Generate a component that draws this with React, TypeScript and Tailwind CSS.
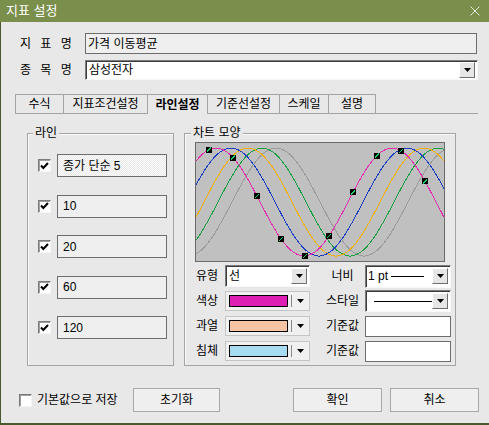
import React from 'react';

const FONT = "font-['Liberation_Sans','Noto_Sans_CJK_KR',sans-serif]";

function Tri() {
  return (
    <svg width="7" height="4" viewBox="0 0 7 4">
      <polygon points="0,0 7,0 3.5,4" fill="#000" />
    </svg>
  );
}

function DropBtn({ className = '' }: { className?: string }) {
  return (
    <div
      className={`flex h-[16px] w-[16px] items-center justify-center border border-t-white border-l-white border-r-[#6f6f6f] border-b-[#6f6f6f] bg-[#e6e6e6] ${className}`}
    >
      <Tri />
    </div>
  );
}

function Check({ checked = true }: { checked?: boolean }) {
  return (
    <div className="flex h-[13px] w-[13px] shrink-0 items-center justify-center border border-t-[#7a7a7a] border-l-[#7a7a7a] border-r-[#f4f4f4] border-b-[#f4f4f4] bg-white shadow-[inset_1px_1px_0_#a0a0a0]">
      {checked && (
        <svg width="9" height="8" viewBox="0 0 9 8">
          <path d="M1 3.5 L3.3 6 L8 1" fill="none" stroke="#000" strokeWidth="2" />
        </svg>
      )}
    </div>
  );
}

const PERIOD = 176;
const yAt = (x: number, peak: number) => 59 - 54 * Math.cos((2 * Math.PI * (x - peak)) / PERIOD);

function curve(peak: number) {
  const pts: string[] = [];
  for (let x = 0; x <= 248; x++) pts.push(`${x},${yAt(x, peak).toFixed(1)}`);
  return pts.join(' ');
}

const lines = [
  { peak: 80, color: '#9a9a9a' },
  { peak: 66, color: '#12a043' },
  { peak: 52, color: '#f4b000' },
  { peak: 35, color: '#1b3cc4' },
  { peak: 20, color: '#e62cae' },
];

function Chart() {
  const marks = Array.from({ length: 10 }, (_, k) => 13 + 24 * k);
  return (
    <div className="h-[120px] w-[250px] border border-[#6b6b6b] bg-[#c0c0c0]">
      <svg width="248" height="118" viewBox="0 0 248 118" shapeRendering="crispEdges">
        {lines.map((l) => (
          <polyline key={l.peak} points={curve(l.peak)} fill="none" stroke={l.color} strokeWidth="1" />
        ))}
        {marks.map((x) => {
          const y = yAt(x, 20);
          return (
            <g key={x}>
              <rect x={x - 3} y={y - 3} width="6" height="6" fill="#000" />
              <line x1={x - 2} y1={y + 2} x2={x + 2} y2={y - 2} stroke="#1fd060" strokeWidth="1" />
            </g>
          );
        })}
      </svg>
    </div>
  );
}

function Swatch({ color }: { color: string }) {
  return (
    <div className="flex h-[20px] w-[85px] items-center border border-[#c4c4c4] bg-[#f0f0f0] pl-[3px]">
      <div className="h-[12px] w-[59px] border border-black" style={{ background: color }} />
      <div className="ml-[3px] h-[12px] w-px bg-[#8a8a8a]" />
      <div className="ml-[5px] flex items-center">
        <Tri />
      </div>
    </div>
  );
}

function SunkenSelect({ children, w, h }: { children: React.ReactNode; w: string; h: string }) {
  return (
    <div
      className={`flex items-center justify-between border border-t-[#7a7a7a] border-l-[#7a7a7a] border-r-[#f8f8f8] border-b-[#f8f8f8] bg-white pr-[2px] shadow-[inset_1px_1px_0_#3c3c3c] ${w} ${h}`}
    >
      {children}
      <DropBtn />
    </div>
  );
}

const tabs = ['수식', '지표조건설정', '라인설정', '기준선설정', '스케일', '설명'];
const tabW = ['w-[48px]', 'w-[84px]', 'w-[60px]', 'w-[72px]', 'w-[49px]', 'w-[48px]'];

const periods = ['종가 단순 5', '10', '20', '60', '120'];

export default function App() {
  return (
    <div className={`flex h-[425px] w-[489px] flex-col overflow-hidden bg-[#e8e8e8] text-[12px] text-black ${FONT}`}>
      {/* title bar */}
      <div className="flex h-[22px] shrink-0 items-center justify-between bg-[#7a8f4b] pl-[6px] pr-[9px]">
        <span className="text-[13px] text-white">지표 설정</span>
        <svg width="10" height="10" viewBox="0 0 10 10">
          <path d="M0.5 0.5 L9.5 9.5 M9.5 0.5 L0.5 9.5" stroke="#e4ead8" strokeWidth="1" />
        </svg>
      </div>

      <div className="flex flex-1 flex-col border-b-2 border-l border-[#4b5a2c]">
        {/* 지표명 */}
        <div className="mt-[11px] flex h-[21px] items-center pl-[19px]">
          <span className="w-[65px] tracking-[3px]">지 표 명</span>
          <div className="flex h-full w-[392px] items-center border border-[#6d6d6d] bg-[#efefef] pl-[2px]">
            가격 이동평균
          </div>
        </div>

        {/* 종목명 */}
        <div className="mt-[6px] flex h-[20px] items-center pl-[19px]">
          <span className="w-[65px] tracking-[3px]">종 목 명</span>
          <SunkenSelect w="w-[393px]" h="h-full">
            <span className="pl-[3px]">삼성전자</span>
          </SunkenSelect>
        </div>

        {/* tabs */}
        <div className="mt-[14px] flex h-[20px] w-[477px] pl-[14px]">
          {tabs.map((t, i) => {
            const active = i === 2;
            return (
              <div
                key={t}
                className={`flex h-full items-center justify-center border-l border-t border-[#a4a4a4] ${tabW[i]} ${
                  active ? 'font-bold' : 'border-b'
                } ${i === tabs.length - 1 ? 'border-r' : ''}`}
              >
                {t}
              </div>
            );
          })}
          <div className="h-full flex-1 border-b border-[#a4a4a4]" />
        </div>

        {/* groups */}
        <div className="mt-[19px] flex h-[233px] gap-[10px] pl-[26px]">
          {/* 라인 */}
          <div className="relative h-full w-[147px] border border-[#a4a4a4] shadow-[inset_1px_1px_0_#fafafa]">
            <span className="absolute left-[5px] top-[-9px] bg-[#e8e8e8] px-[2px] leading-[16px]">라인</span>
            <div className="flex flex-col gap-[17.5px] pl-[10px] pt-[20px]">
              {periods.map((p, i) => (
                <div key={p} className="flex h-[23px] items-center gap-[6px]">
                  <Check />
                  <div
                    className={`flex h-full w-[110px] items-center border border-[#6d6d6d] pl-[5px] ${
                      i === 0
                        ? 'bg-[repeating-conic-gradient(#ffffff_0_25%,#e6e6e6_0_50%)] bg-[length:2px_2px]'
                        : 'bg-[#efefef]'
                    }`}
                  >
                    {p}
                  </div>
                </div>
              ))}
            </div>
          </div>

          {/* 차트 모양 */}
          <div className="relative h-full w-[272px] border border-[#a4a4a4] shadow-[inset_1px_1px_0_#fafafa]">
            <span className="absolute left-[6px] top-[-9px] bg-[#e8e8e8] px-[2px] leading-[16px]">차트 모양</span>
            <div className="pl-[10px] pt-[8px]">
              <Chart />
            </div>
            <div className="mt-[3px] grid grid-cols-[29px_85px_55px_86px] grid-rows-[22px_22px_22px_22px] items-center gap-y-[3px] pl-[11px]">
              <span>유형</span>
              <SunkenSelect w="w-[85px]" h="h-[22px]">
                <span className="pl-[3px]">선</span>
              </SunkenSelect>
              <span className="pl-[10px] text-center">너비</span>
              <SunkenSelect w="w-[86px]" h="h-[23px]">
                <span className="flex items-center pl-[2px]">
                  1 pt
                  <span className="ml-[3px] inline-block h-px w-[33px] bg-black" />
                </span>
              </SunkenSelect>

              <span>색상</span>
              <Swatch color="#dd1fb4" />
              <span className="pl-[10px] text-center">스타일</span>
              <SunkenSelect w="w-[86px]" h="h-[22px]">
                <span className="ml-[8px] inline-block h-px w-[58px] bg-black" />
              </SunkenSelect>

              <span>과열</span>
              <Swatch color="#f6c4a2" />
              <span className="pl-[10px] text-center">기준값</span>
              <div className="h-[21px] w-[86px] border border-[#6d6d6d] bg-white" />

              <span>침체</span>
              <Swatch color="#a6dcf2" />
              <span className="pl-[10px] text-center">기준값</span>
              <div className="h-[21px] w-[86px] border border-[#6d6d6d] bg-white" />
            </div>
          </div>
        </div>

        {/* bottom */}
        <div className="mt-[22px] flex h-[24px] items-center pl-[18px]">
          <Check checked={false} />
          <span className="ml-[5px] w-[96px]">기본값으로 저장</span>
          <div className="flex h-full w-[87px] items-center justify-center border border-[#a8a8a8] bg-[#efefef]">초기화</div>
          <div className="ml-[73px] flex h-full w-[89px] items-center justify-center border border-[#a8a8a8] bg-[#efefef]">확인</div>
          <div className="ml-[8px] flex h-full w-[89px] items-center justify-center border border-[#a8a8a8] bg-[#efefef]">취소</div>
        </div>
      </div>
    </div>
  );
}
